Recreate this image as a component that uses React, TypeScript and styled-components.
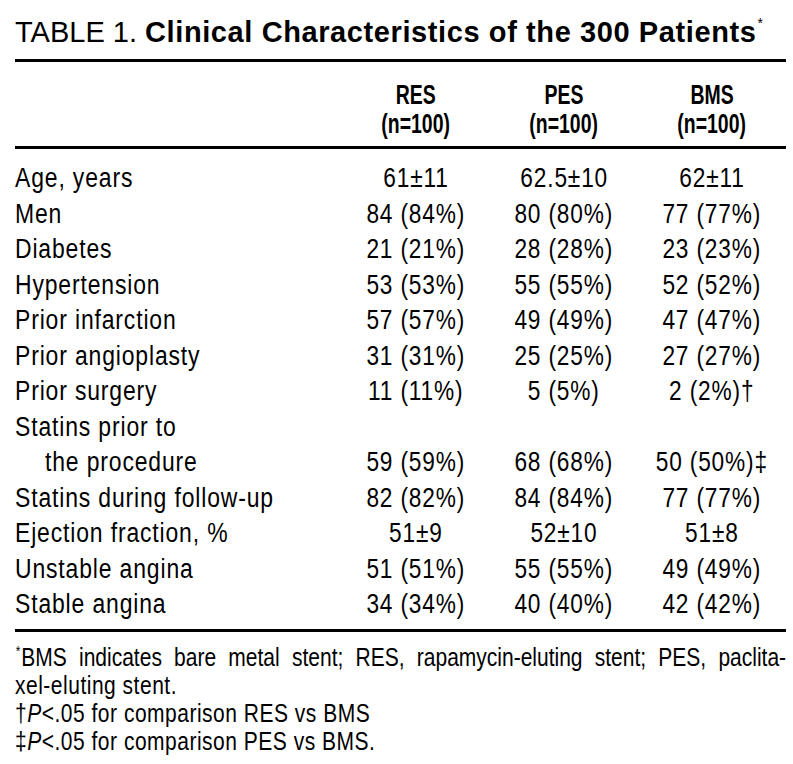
import React from "react";
import styled, { createGlobalStyle } from "styled-components";

const GlobalStyle = createGlobalStyle`
  html, body {
    margin: 0;
    padding: 0;
    background: #ffffff;
    color: #000000;
  }
`;

const Page = styled.div`
  width: 771px;
  padding: 16px 7px 0 15px;
  font-family: "Liberation Sans", Arial, Helvetica, sans-serif;
`;

const Title = styled.h1`
  margin: 0;
  font-size: 29px;
  line-height: 32px;
  font-weight: 400;
  white-space: nowrap;
`;

const TitleBold = styled.span`
  font-weight: 700;
  letter-spacing: 0.6px;
`;

const Sup = styled.sup<{ $lift: number }>`
  font-size: 14px;
  font-weight: 400;
  vertical-align: ${(p) => p.$lift}px;
  line-height: 0;
  margin: 0 1px;
`;

/* Condensed look: the reference uses a condensed Helvetica, not installed here */
const Squeeze = styled.span<{ $scale: number; $origin: string }>`
  display: inline-block;
  white-space: nowrap;
  transform: scaleX(${(p) => p.$scale});
  transform-origin: ${(p) => p.$origin} center;
`;

const Rule = styled.div<{ $top: number }>`
  height: 3px;
  background: #000;
  margin-top: ${(p) => p.$top}px;
`;

const Grid = styled.div`
  display: grid;
  grid-template-columns: 327px repeat(3, 148px);
`;

const HeadBlock = styled(Grid)`
  padding: 19px 0 7px;
`;

const HeadCell = styled.div`
  font-weight: 700;
  font-size: 27px;
  line-height: 29px;
  text-align: center;
`;

const Body = styled.div`
  padding: 12px 0 6px;
`;

const Row = styled(Grid)`
  font-size: 27px;
  line-height: 35.5px;
  letter-spacing: 1px;
`;

const Label = styled.div<{ $indent?: boolean }>`
  padding-left: ${(p) => (p.$indent ? 30 : 0)}px;
  white-space: nowrap;
`;

const Value = styled.div`
  text-align: center;
  white-space: nowrap;
`;

const Notes = styled.div`
  width: 771px;
  overflow: hidden;
  padding-top: 11px;
`;

const NotesInner = styled.div`
  width: 918px;
  transform: scaleX(0.84);
  transform-origin: left top;
  font-size: 25px;
  line-height: 28px;
`;

const NoteLine = styled.div<{ $justify?: boolean }>`
  white-space: ${(p) => (p.$justify ? "normal" : "nowrap")};
  text-align: ${(p) => (p.$justify ? "justify" : "left")};
  text-align-last: ${(p) => (p.$justify ? "justify" : "auto")};
  letter-spacing: ${(p) => (p.$justify ? 0 : 0.6)}px;
`;

const Italic = styled.i`
  font-style: italic;
`;

type RowData = { label: string; values: string[]; indent?: boolean };

const rows: RowData[] = [
  { label: "Age, years", values: ["61±11", "62.5±10", "62±11"] },
  { label: "Men", values: ["84 (84%)", "80 (80%)", "77 (77%)"] },
  { label: "Diabetes", values: ["21 (21%)", "28 (28%)", "23 (23%)"] },
  { label: "Hypertension", values: ["53 (53%)", "55 (55%)", "52 (52%)"] },
  { label: "Prior infarction", values: ["57 (57%)", "49 (49%)", "47 (47%)"] },
  { label: "Prior angioplasty", values: ["31 (31%)", "25 (25%)", "27 (27%)"] },
  { label: "Prior surgery", values: ["11 (11%)", "5 (5%)", "2 (2%)†"] },
  { label: "Statins prior to", values: ["", "", ""] },
  { label: "the procedure", values: ["59 (59%)", "68 (68%)", "50 (50%)‡"], indent: true },
  { label: "Statins during follow-up", values: ["82 (82%)", "84 (84%)", "77 (77%)"] },
  { label: "Ejection fraction, %", values: ["51±9", "52±10", "51±8"] },
  { label: "Unstable angina", values: ["51 (51%)", "55 (55%)", "49 (49%)"] },
  { label: "Stable angina", values: ["34 (34%)", "40 (40%)", "42 (42%)"] },
];

const groups = [
  { name: "RES", n: "(n=100)" },
  { name: "PES", n: "(n=100)" },
  { name: "BMS", n: "(n=100)" },
];

export default function App() {
  return (
    <>
      <GlobalStyle />
      <Page>
        <Title>
          TABLE 1. <TitleBold>Clinical Characteristics of the 300 Patients</TitleBold>
          <Sup $lift={14}>*</Sup>
        </Title>
        <Rule $top={11} />
        <HeadBlock>
          <div />
          {groups.map((g) => (
            <HeadCell key={g.name}>
              <Squeeze $scale={0.72} $origin="center">{g.name}</Squeeze>
              <br />
              <Squeeze $scale={0.72} $origin="center">{g.n}</Squeeze>
            </HeadCell>
          ))}
        </HeadBlock>
        <Rule $top={0} />
        <Body>
          {rows.map((r) => (
            <Row key={r.label}>
              <Label $indent={r.indent}>
                <Squeeze $scale={0.85} $origin="left">{r.label}</Squeeze>
              </Label>
              {r.values.map((v, i) => (
                <Value key={i}>
                  <Squeeze $scale={0.84} $origin="center">{v}</Squeeze>
                </Value>
              ))}
            </Row>
          ))}
        </Body>
        <Rule $top={0} />
        <Notes>
          <NotesInner>
            <NoteLine $justify>
              <Sup $lift={10}>*</Sup>BMS indicates bare metal stent; RES, rapamycin-eluting stent; PES, paclita-
            </NoteLine>
            <NoteLine>xel-eluting stent.</NoteLine>
            <NoteLine>
              †<Italic>P</Italic>&lt;.05 for comparison RES vs BMS
            </NoteLine>
            <NoteLine>
              ‡<Italic>P</Italic>&lt;.05 for comparison PES vs BMS.
            </NoteLine>
          </NotesInner>
        </Notes>
      </Page>
    </>
  );
}
